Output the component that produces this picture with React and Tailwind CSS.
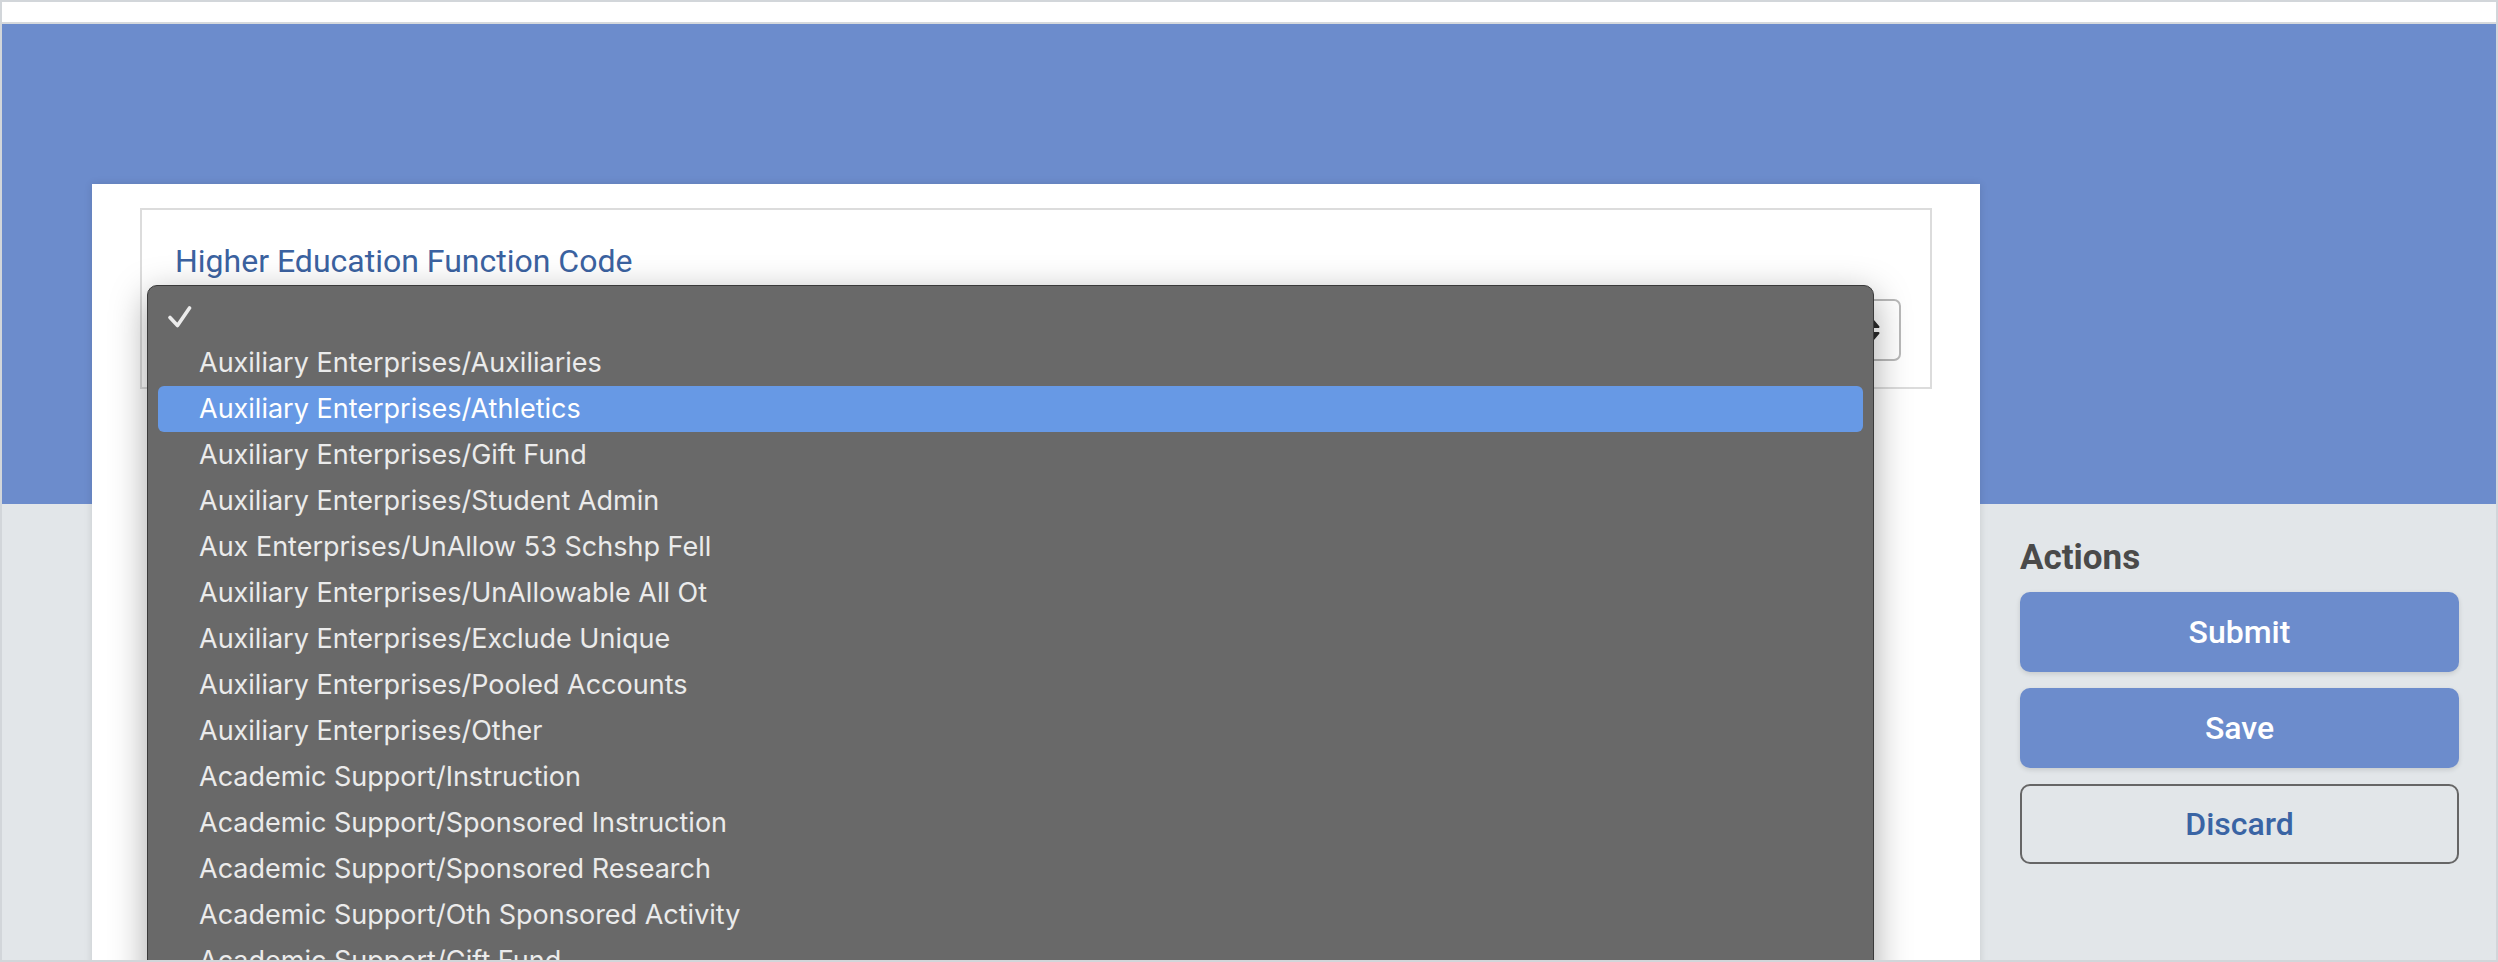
import React from "react";

const options = [
  "Auxiliary Enterprises/Auxiliaries",
  "Auxiliary Enterprises/Athletics",
  "Auxiliary Enterprises/Gift Fund",
  "Auxiliary Enterprises/Student Admin",
  "Aux Enterprises/UnAllow 53 Schshp Fell",
  "Auxiliary Enterprises/UnAllowable All Ot",
  "Auxiliary Enterprises/Exclude Unique",
  "Auxiliary Enterprises/Pooled Accounts",
  "Auxiliary Enterprises/Other",
  "Academic Support/Instruction",
  "Academic Support/Sponsored Instruction",
  "Academic Support/Sponsored Research",
  "Academic Support/Oth Sponsored Activity",
  "Academic Support/Gift Fund",
];

const CheckMark = () => (
  <svg width="24" height="22" viewBox="0 0 24 22" fill="none">
    <path
      d="M2 11.5 L9.5 19.5 L21.5 2"
      stroke="#ececec"
      strokeWidth="3.6"
      strokeLinecap="round"
      strokeLinejoin="round"
    />
  </svg>
);

const SelectArrows = () => (
  <svg width="18" height="28" viewBox="0 0 18 28" fill="none">
    <path d="M3.5 11 L9 4.5 L14.5 11 Z" fill="#2b2b2b" stroke="#2b2b2b" strokeWidth="2" strokeLinejoin="round" />
    <path d="M3.5 17 L9 23.5 L14.5 17 Z" fill="#2b2b2b" stroke="#2b2b2b" strokeWidth="2" strokeLinejoin="round" />
  </svg>
);

const App = () => {
  const selected = 1;

  return (
    <div className="w-[2498px] h-[962px] overflow-hidden border-2 border-[#d2d6da] bg-[#e2e6e9] font-['Roboto',sans-serif]">
      <div className="h-[22px] bg-white border-b-2 border-[#d6d9dc]" />
      <div className="h-[480px] bg-[#6c8ccc]" />

      <div className="flex -mt-[320px] pl-[90px]">
        {/* form card */}
        <div className="relative w-[1888px] h-[800px] bg-white pt-[24px] px-[48px] shadow-[0_0_8px_rgba(0,0,0,0.12)]">
          <div className="h-[181px] border-2 border-[#dcdcdc] pl-[33px] pr-[29px] pt-[32px]">
            <label className="block text-[32px] leading-[38px] text-[#3b62a0]">
              Higher Education Function Code
            </label>
            <div className="mt-[19px] h-[62px] rounded-[7px] border-2 border-[#b9b9b9] bg-white flex items-center justify-end pr-[17px]">
              <SelectArrows />
            </div>
          </div>

          {/* open native select list */}
          <div className="absolute left-[55px] top-[101px] w-[1727px] h-[720px] rounded-t-[10px] border border-[#3a3a3a] bg-[#696969] pt-[8px] px-[10px] shadow-[0_10px_36px_rgba(0,0,0,0.35)] font-['Inter',sans-serif] text-[27px] text-[#ebebeb]">
            <div className="h-[46px] flex items-center pl-[10px]">
              <CheckMark />
            </div>
            {options.map((opt, i) => (
              <div
                key={opt}
                className={
                  i === selected
                    ? "h-[46px] flex items-center pl-[41px] rounded-[6px] bg-[#6799e5] text-white"
                    : "h-[46px] flex items-center pl-[41px] rounded-[6px]"
                }
              >
                {opt}
              </div>
            ))}
          </div>
        </div>

        {/* actions */}
        <div className="ml-[40px] w-[439px] pt-[353px]">
          <h2 className="text-[35px] leading-[42px] font-bold text-[#4a4a4a]">Actions</h2>
          <div className="mt-[13px] flex flex-col gap-[16px]">
            <button className="h-[80px] rounded-[10px] bg-[#6c8ccc] text-white text-[32px] font-medium shadow-[0_2px_5px_rgba(0,0,0,0.12)]">
              Submit
            </button>
            <button className="h-[80px] rounded-[10px] bg-[#6c8ccc] text-white text-[32px] font-medium shadow-[0_2px_5px_rgba(0,0,0,0.12)]">
              Save
            </button>
            <button className="h-[80px] rounded-[10px] border-2 border-[#666666] text-[#3a64a4] text-[32px] font-medium">
              Discard
            </button>
          </div>
        </div>
      </div>
    </div>
  );
};

export default App;
